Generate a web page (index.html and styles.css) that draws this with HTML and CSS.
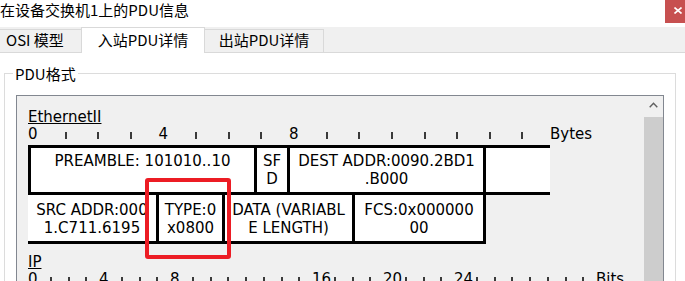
FILE: index.html
```html
<!DOCTYPE html>
<html lang="zh-CN">
<head>
    <meta charset="UTF-8">
    <title>在设备交换机1上的PDU信息</title>
    <link rel="stylesheet" href="styles.css">
</head>
<body>
    <div class="titlebar">
        <span class="title">在设备交换机1上的PDU信息</span>
        <div class="close-btn">
            <svg width="8" height="7" viewBox="0 0 8 7"><path d="M0.5 0.5 L7.5 6.5 M7.5 0.5 L0.5 6.5" stroke="#fff" stroke-width="1.6" fill="none"/></svg>
        </div>
    </div>
    <div class="tabs">
        <div class="tab tab-first">OSI 模型</div>
        <div class="tab active">入站PDU详情</div>
        <div class="tab tab-last">出站PDU详情</div>
    </div>
    <div class="tab-page">
        <fieldset class="group">
            <legend>PDU格式</legend>
            <div class="pane">
                <div class="pane-content">
                    <div class="layer">
                        <div class="layer-name">EthernetII</div>
                        <div class="ruler bytes" id="byteRuler"></div>
                        <div class="frame">
                            <div class="frame-row row-top">
                                <div class="field first" style="width: 229px">PREAMBLE: 101010..10</div>
                                <div class="field" style="width: 33px">SF<br>D</div>
                                <div class="field" style="width: 196px">DEST ADDR:0090.2BD1<br>.B000</div>
                                <div class="field empty" style="width: 64px"></div>
                            </div>
                            <div class="frame-row row-bottom">
                                <div class="field" style="width: 131px">SRC ADDR:000<br>1.C711.6195</div>
                                <div class="field" style="width: 66px">TYPE:0<br>x0800</div>
                                <div class="field" style="width: 130px">DATA (VARIABL<br>E LENGTH)</div>
                                <div class="field" style="width: 131px">FCS:0x000000<br>00</div>
                            </div>
                            <div class="highlight"></div>
                        </div>
                    </div>
                    <div class="layer layer-ip">
                        <div class="layer-name">IP</div>
                        <div class="ruler bits" id="bitRuler"></div>
                    </div>
                </div>
                <div class="scrollbar">
                    <div class="scroll-up">
                        <svg width="9" height="6" viewBox="0 0 9 6"><path d="M0.7 5.3 L4.5 1.3 L8.3 5.3" stroke="#606060" stroke-width="1.4" fill="none"/></svg>
                    </div>
                    <div class="scroll-thumb"></div>
                </div>
            </div>
        </fieldset>
    </div>

    <script>
        // build a ruler: numbers at the given marks, a tick everywhere else
        function buildRuler(el, count, marks, unit) {
            for (let i = 0; i < count; i++) {
                const cell = document.createElement('span');
                cell.className = 'ruler-cell';
                if (marks.includes(i)) {
                    cell.textContent = i;
                } else {
                    const tick = document.createElement('i');
                    tick.className = 'tick';
                    cell.appendChild(tick);
                }
                el.appendChild(cell);
            }
            const label = document.createElement('span');
            label.className = 'ruler-unit';
            label.textContent = unit;
            el.appendChild(label);
        }

        buildRuler(document.getElementById('byteRuler'), 16, [0, 4, 8], 'Bytes');
        buildRuler(document.getElementById('bitRuler'), 32, [0, 4, 8, 16, 20, 24], 'Bits');
    </script>
</body>
</html>
```

FILE: styles.css
```css
body {
    margin: 0;
    width: 685px;
    height: 281px;
    overflow: hidden;
    background-color: white;
    font-family: "Noto Sans CJK SC", sans-serif;
    font-size: 15px;
    color: #000;
}
.titlebar {
    display: flex;
    justify-content: space-between;
    height: 27px;
}
.title {
    line-height: 19px;
    white-space: nowrap;
}
.close-btn {
    width: 20px;
    height: 23px;
    box-sizing: border-box;
    padding: 7px 0 0 9px;
    background-color: #c75050;
}
.close-btn svg {
    display: block;
}
.tabs {
    display: flex;
    align-items: flex-end;
    height: 25px;
    background-color: #f0f0f0;
    border-bottom: 1px solid #d9d9d9;
}
.tab {
    height: 22px;
    line-height: 19px;
    border-top: 1px solid #d9d9d9;
    background-color: #f0f0f0;
    text-align: center;
    white-space: nowrap;
}
.tab-first {
    width: 75px;
    padding-left: 6px;
    text-align: left;
}
.tab-last {
    width: 118px;
    border-right: 1px solid #d9d9d9;
}
.tab.active {
    width: 122px;
    height: 23px;
    padding-top: 2px;
    margin-bottom: -1px;
    background-color: white;
    border-left: 1px solid #d9d9d9;
    border-right: 1px solid #d9d9d9;
}
.tab-page {
    padding: 11px 9px 0 4px;
}
.group {
    margin: 0;
    padding: 12px 11px 0 11px;
    border: 1px solid #dcdcdc;
    height: 300px;
}
.group legend {
    margin-left: -3px;
    padding: 0 2px;
    line-height: 19px;
}
.pane {
    display: flex;
    height: 260px;
    border: 1px solid #828790;
    background-color: #f0f0f0;
}
.pane-content {
    flex: 1;
    padding: 13px 0 0 11px;
    font-family: "DejaVu Sans", sans-serif;
    font-size: 15px;
}
.layer-name {
    line-height: 17px;
    text-decoration: underline;
}
.ruler {
    display: flex;
    align-items: baseline;
    line-height: 16px;
    white-space: nowrap;
}
.ruler-cell {
    flex: none;
    width: 32.625px;
}
.bits .ruler-cell {
    width: 17.75px;
}
.tick {
    display: inline-block;
    width: 2px;
    height: 7px;
    margin-left: 4px;
    background-color: #3a3a3a;
}
.frame {
    position: relative;
    margin-top: 3px;
}
.frame-row {
    display: flex;
    border-bottom: 3px solid #000;
}
.row-top {
    width: 522px;
    height: 44px;
    border-top: 3px solid #000;
}
.row-bottom {
    width: 458px;
    height: 46px;
}
.field {
    box-sizing: border-box;
    padding-top: 4px;
    line-height: 18px;
    text-align: center;
    white-space: nowrap;
    background-color: white;
    border-right: 3px solid #000;
}
.row-bottom .field {
    padding-top: 6px;
}
.field.first {
    border-left: 3px solid #000;
}
.field.empty {
    border-right: none;
}
.highlight {
    position: absolute;
    left: 117px;
    top: 33px;
    width: 86px;
    height: 81px;
    box-sizing: border-box;
    border: 4px solid #ec1c24;
    border-radius: 3px;
}
.layer-ip {
    margin-top: 10px;
}
.scrollbar {
    width: 19px;
    display: flex;
    flex-direction: column;
}
.scroll-up {
    height: 21px;
    display: flex;
    align-items: center;
    justify-content: center;
}
.scroll-up svg {
    margin-bottom: 3px;
}
.scroll-thumb {
    flex: 1;
    background-color: #cdcdcd;
}
```
